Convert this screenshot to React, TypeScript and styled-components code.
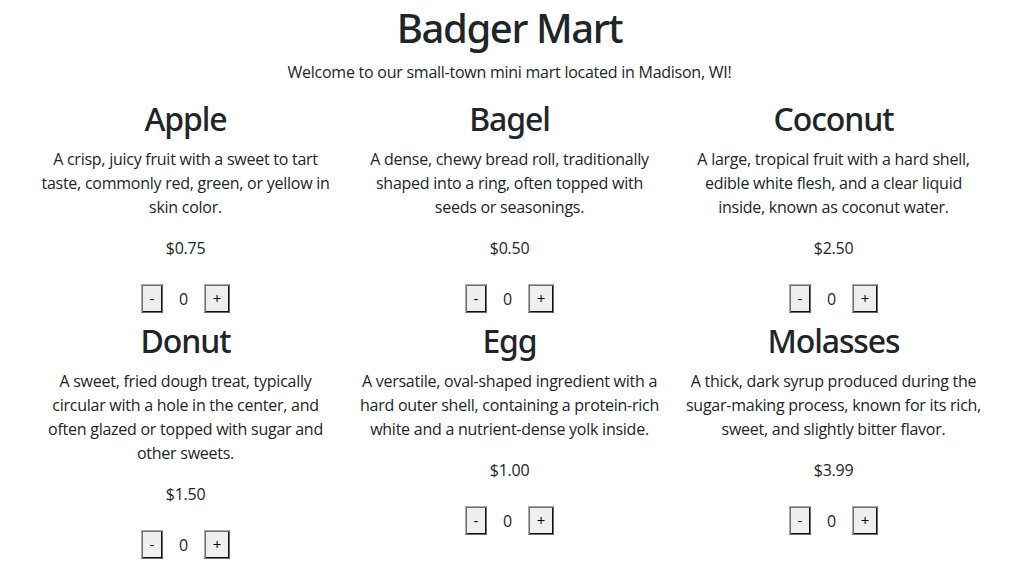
import React, { useState } from "react";
import styled, { createGlobalStyle } from "styled-components";

const GlobalStyle = createGlobalStyle`
  html, body {
    margin: 0;
    padding: 0;
    background: #ffffff;
  }
  body {
    font-family: "Open Sans", "Noto Sans", sans-serif;
    font-size: 16px;
    line-height: 24px;
    color: #212529;
    letter-spacing: -0.25px;
  }
  * { box-sizing: border-box; }
`;

const Page = styled.div`
  width: 1019px;
  text-align: center;
`;

const Title = styled.h1`
  margin: 4px 0 8px;
  font-family: "Noto Sans", "Open Sans", sans-serif;
  font-size: 40px;
  line-height: 48px;
  font-weight: 500;
  letter-spacing: -1.4px;
`;

const Subtitle = styled.p`
  margin: 0 0 16px;
`;

const Grid = styled.div`
  width: 972px;
  margin: 0 auto;
  display: grid;
  grid-template-columns: repeat(3, 1fr);
  align-items: start;
`;

const Card = styled.div`
  padding: 0 12px;
  display: flex;
  flex-direction: column;
  align-items: center;
  margin-bottom: 9px;
`;

const Name = styled.h2`
  margin: 0 0 9px;
  font-family: "Noto Sans", "Open Sans", sans-serif;
  font-size: 32px;
  line-height: 38px;
  font-weight: 500;
  letter-spacing: -1.1px;
`;

const Description = styled.p`
  margin: 0 0 16px;
  width: 100%;
`;

const Price = styled.p`
  margin: 1px 0 24px;
`;

const Controls = styled.div`
  display: flex;
  align-items: center;
  height: 29px;
`;

const StepButton = styled.button<{ $w: number }>`
  width: ${(p) => p.$w}px;
  height: 29px;
  padding: 0;
  background: #efefef;
  color: #000000;
  font-family: "Open Sans", "Noto Sans", sans-serif;
  font-size: 15px;
  line-height: 1;
  border-style: solid;
  border-width: 1px;
  border-color: #a9a9a9 #6a6a6a #6a6a6a #a9a9a9;
  box-shadow: inset 1px 1px 0 #6f6f6f, inset -1px -1px 0 #111111;
  cursor: pointer;
`;

const Count = styled.span`
  margin: 0 16px;
  min-width: 9px;
`;

type Item = { name: string; description: string; price: number };

const items: Item[] = [
  {
    name: "Apple",
    description:
      "A crisp, juicy fruit with a sweet to tart taste, commonly red, green, or yellow in skin color.",
    price: 0.75,
  },
  {
    name: "Bagel",
    description:
      "A dense, chewy bread roll, traditionally shaped into a ring, often topped with seeds or seasonings.",
    price: 0.5,
  },
  {
    name: "Coconut",
    description:
      "A large, tropical fruit with a hard shell, edible white flesh, and a clear liquid inside, known as coconut water.",
    price: 2.5,
  },
  {
    name: "Donut",
    description:
      "A sweet, fried dough treat, typically circular with a hole in the center, and often glazed or topped with sugar and other sweets.",
    price: 1.5,
  },
  {
    name: "Egg",
    description:
      "A versatile, oval-shaped ingredient with a hard outer shell, containing a protein-rich white and a nutrient-dense yolk inside.",
    price: 1.0,
  },
  {
    name: "Molasses",
    description:
      "A thick, dark syrup produced during the sugar-making process, known for its rich, sweet, and slightly bitter flavor.",
    price: 3.99,
  },
];

function Product({ item }: { item: Item }) {
  const [count, setCount] = useState(0);
  return (
    <Card>
      <Name>{item.name}</Name>
      <Description>{item.description}</Description>
      <Price>${item.price.toFixed(2)}</Price>
      <Controls>
        <StepButton $w={22} onClick={() => setCount((c) => Math.max(0, c - 1))}>
          -
        </StepButton>
        <Count>{count}</Count>
        <StepButton $w={26} onClick={() => setCount((c) => c + 1)}>
          +
        </StepButton>
      </Controls>
    </Card>
  );
}

export default function App() {
  return (
    <Page>
      <GlobalStyle />
      <Title>Badger Mart</Title>
      <Subtitle>Welcome to our small-town mini mart located in Madison, WI!</Subtitle>
      <Grid>
        {items.map((item) => (
          <Product key={item.name} item={item} />
        ))}
      </Grid>
    </Page>
  );
}
